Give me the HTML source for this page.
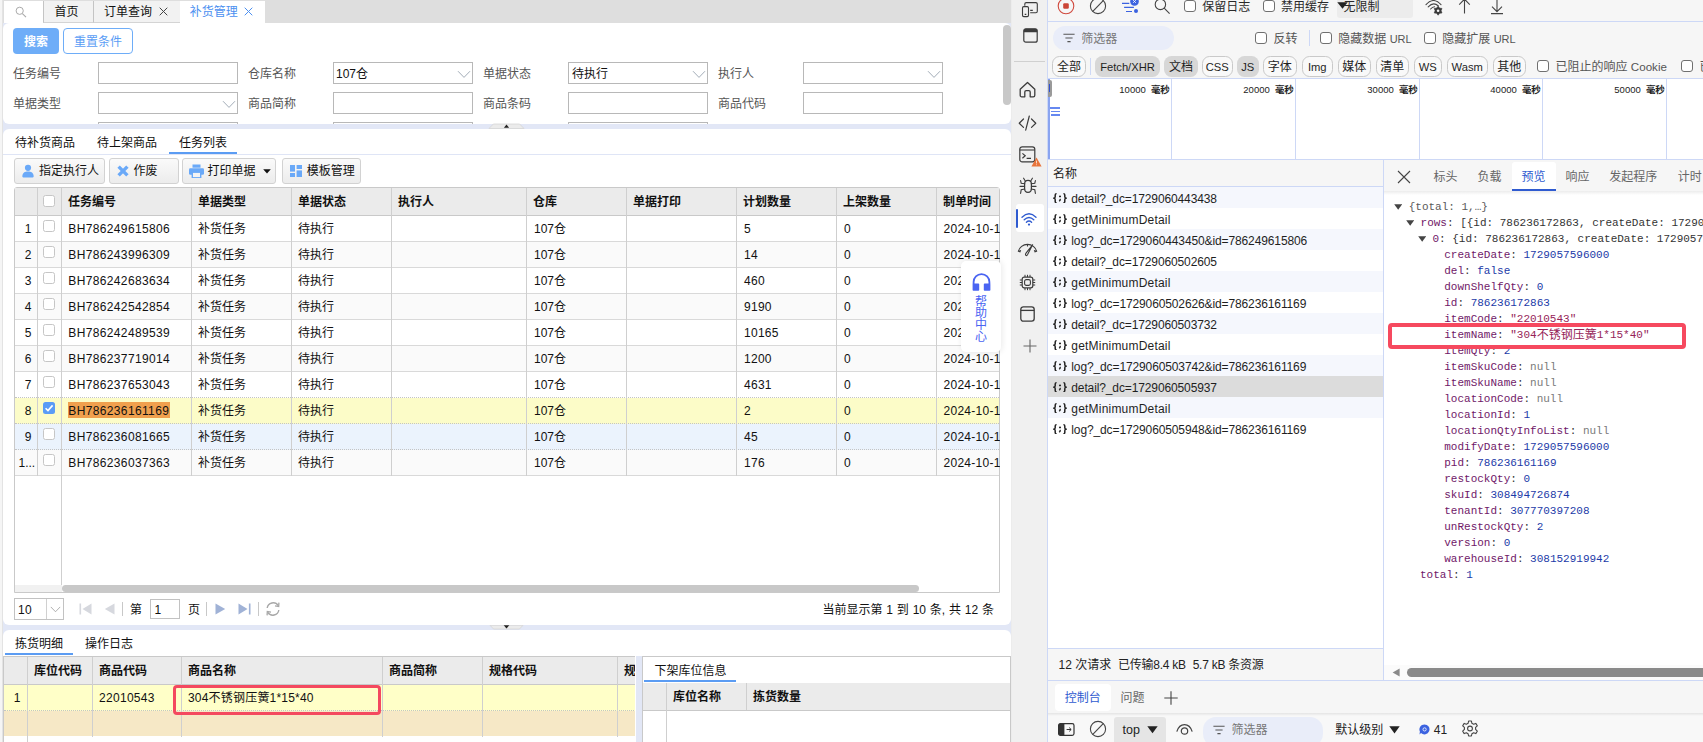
<!DOCTYPE html><html lang="zh-CN"><head><meta charset="utf-8"><title>补货管理</title><style>
*{box-sizing:border-box;margin:0;padding:0}
html,body{width:1703px;height:742px;overflow:hidden;background:#f5f5f5}
body{font-family:"Liberation Sans","Noto Sans CJK SC",sans-serif;font-size:12px;color:#111;position:relative}
#root{position:absolute;left:0;top:0;width:1703px;height:742px;overflow:hidden}
#root div,#root svg{position:absolute}
.t{white-space:nowrap;font-size:12px}
.b{font-weight:bold}
.m{white-space:nowrap;font-family:"Liberation Mono","Noto Sans CJK SC",monospace;font-size:11px}
.k{color:#701868}.n{color:#1c3aa8}.s{color:#962458}.g{color:#7a7a7a}.d{color:#333}
span{position:static}
</style></head><body><div id="root">
<div style="left:2px;top:0px;width:1px;height:742px;background:#e3e3e3"></div>
<div style="left:3px;top:0px;width:1008px;height:742px;background:#e2e7f6"></div>
<div style="left:3px;top:0px;width:1008px;height:23px;background:#dedede"></div>
<div style="left:4px;top:1px;width:39px;height:22px;background:#fff"></div>
<svg style="left:13px;top:4px" width="16" height="16" viewBox="0 0 16 16"><circle cx="6.7" cy="6.8" r="3.6" fill="none" stroke="#aaa" stroke-width="1"/><path d="M9.4 9.6 L13 13.2" stroke="#aaa" stroke-width="1.1" fill="none"/></svg>
<div style="left:43px;top:1px;width:50px;height:22px;background:#f2f2f2;border-left:1px solid #c4c4c4;border-bottom:1px solid #d4d4d4"></div>
<div style="left:93px;top:1px;width:87px;height:22px;background:#f2f2f2;border-left:1px solid #c4c4c4;border-bottom:1px solid #d4d4d4"></div>
<div style="left:180px;top:1px;width:85px;height:22px;background:#fff"></div>
<div class="t" style="left:54.5px;top:3.5px;height:16px;line-height:16px;">首页</div>
<div class="t" style="left:104px;top:3.5px;height:16px;line-height:16px;">订单查询</div>
<div class="t" style="left:189.7px;top:3.5px;height:16px;line-height:16px;color:#4b8ff0">补货管理</div>
<svg style="left:158.5px;top:7px" width="9" height="9" viewBox="0 0 9 9"><path d="M0.7 0.7 L8.3 8.3 M8.3 0.7 L0.7 8.3" stroke="#444" stroke-width="1" fill="none"/></svg>
<svg style="left:244.3px;top:7px" width="9" height="9" viewBox="0 0 9 9"><path d="M0.7 0.7 L8.3 8.3 M8.3 0.7 L0.7 8.3" stroke="#4b8ff0" stroke-width="1" fill="none"/></svg>
<div style="left:3px;top:23px;width:1008px;height:101px;background:#fff;border-radius:6px;overflow:hidden"></div>
<div style="left:13px;top:28px;width:46px;height:26px;background:#6eadf8;border-radius:4px"></div>
<div class="t" style="left:13px;top:33.8px;height:16px;line-height:16px;width:46px;text-align:center;color:#fff;font-weight:bold">搜索</div>
<div style="left:63px;top:28px;width:70px;height:26px;background:#fff;border:1px solid #6eadf8;border-radius:4px"></div>
<div class="t" style="left:63px;top:33.8px;height:16px;line-height:16px;width:70px;text-align:center;color:#5a9df5">重置条件</div>
<div class="t" style="left:13px;top:65.5px;height:16px;line-height:16px;color:#555">任务编号</div>
<div style="left:98px;top:62px;width:140px;height:22px;background:#fff;border:1px solid #b8b8b8"></div>
<div class="t" style="left:248px;top:65.5px;height:16px;line-height:16px;color:#555">仓库名称</div>
<div style="left:333px;top:62px;width:140px;height:22px;background:#fff;border:1px solid #b8b8b8"></div>
<svg style="left:456.5px;top:69.5px" width="14" height="9" viewBox="0 0 14 9"><path d="M1 1.2 L7 7.4 L13 1.2" stroke="#a3adb8" stroke-width="1" fill="none"/></svg>
<div class="t" style="left:336px;top:65.5px;height:16px;line-height:16px;color:#111">107仓</div>
<div class="t" style="left:483px;top:65.5px;height:16px;line-height:16px;color:#555">单据状态</div>
<div style="left:568px;top:62px;width:140px;height:22px;background:#fff;border:1px solid #b8b8b8"></div>
<svg style="left:691.5px;top:69.5px" width="14" height="9" viewBox="0 0 14 9"><path d="M1 1.2 L7 7.4 L13 1.2" stroke="#a3adb8" stroke-width="1" fill="none"/></svg>
<div class="t" style="left:572px;top:65.5px;height:16px;line-height:16px;color:#111">待执行</div>
<div class="t" style="left:718px;top:65.5px;height:16px;line-height:16px;color:#555">执行人</div>
<div style="left:803px;top:62px;width:140px;height:22px;background:#fff;border:1px solid #b8b8b8"></div>
<svg style="left:926.5px;top:69.5px" width="14" height="9" viewBox="0 0 14 9"><path d="M1 1.2 L7 7.4 L13 1.2" stroke="#a3adb8" stroke-width="1" fill="none"/></svg>
<div class="t" style="left:13px;top:95.5px;height:16px;line-height:16px;color:#555">单据类型</div>
<div style="left:98px;top:92px;width:140px;height:22px;background:#fff;border:1px solid #b8b8b8"></div>
<svg style="left:221.5px;top:99.5px" width="14" height="9" viewBox="0 0 14 9"><path d="M1 1.2 L7 7.4 L13 1.2" stroke="#a3adb8" stroke-width="1" fill="none"/></svg>
<div class="t" style="left:248px;top:95.5px;height:16px;line-height:16px;color:#555">商品简称</div>
<div style="left:333px;top:92px;width:140px;height:22px;background:#fff;border:1px solid #b8b8b8"></div>
<div class="t" style="left:483px;top:95.5px;height:16px;line-height:16px;color:#555">商品条码</div>
<div style="left:568px;top:92px;width:140px;height:22px;background:#fff;border:1px solid #b8b8b8"></div>
<div class="t" style="left:718px;top:95.5px;height:16px;line-height:16px;color:#555">商品代码</div>
<div style="left:803px;top:92px;width:140px;height:22px;background:#fff;border:1px solid #b8b8b8"></div>
<div style="left:98px;top:122px;width:140px;height:2px;border-top:1px solid #b8b8b8;border-left:1px solid #b8b8b8;border-right:1px solid #b8b8b8;background:#fff"></div>
<div style="left:333px;top:122px;width:140px;height:2px;border-top:1px solid #b8b8b8;border-left:1px solid #b8b8b8;border-right:1px solid #b8b8b8;background:#fff"></div>
<div style="left:568px;top:122px;width:140px;height:2px;border-top:1px solid #b8b8b8;border-left:1px solid #b8b8b8;border-right:1px solid #b8b8b8;background:#fff"></div>
<div style="left:1002.5px;top:24.5px;width:8px;height:80px;background:#c8c8c8;border-radius:4px"></div>
<svg style="left:488px;top:123.4px" width="38" height="6" viewBox="0 0 38 6"><path d="M1 5.5 L5.4 1 L31.6 1 L36 5.5 Z" fill="#ebebeb" stroke="#d6d6d6" stroke-width="0.8"/><path d="M15.9 4.8 L18.5 1.6 L21.1 4.8 Z" fill="#222"/></svg>
<div style="left:3px;top:129px;width:1008px;height:496px;background:#fff;border-radius:6px"></div>
<div class="t" style="left:15px;top:134.5px;height:16px;line-height:16px;">待补货商品</div>
<div class="t" style="left:97px;top:134.5px;height:16px;line-height:16px;">待上架商品</div>
<div class="t" style="left:179px;top:134.5px;height:16px;line-height:16px;">任务列表</div>
<div style="left:3px;top:154px;width:1008px;height:1px;background:#dfe5f6"></div>
<div style="left:169px;top:152px;width:68px;height:2px;background:#5b9cf3"></div>
<div style="left:14px;top:158px;width:90.5px;height:26px;background:linear-gradient(#fafafa,#ececec);border:1px solid #d2d2d2;border-radius:3px"></div>
<div style="left:109px;top:158px;width:69.5px;height:26px;background:linear-gradient(#fafafa,#ececec);border:1px solid #d2d2d2;border-radius:3px"></div>
<div style="left:182px;top:158px;width:93.5px;height:26px;background:linear-gradient(#fafafa,#ececec);border:1px solid #d2d2d2;border-radius:3px"></div>
<div style="left:282px;top:158px;width:78.5px;height:26px;background:linear-gradient(#fafafa,#ececec);border:1px solid #d2d2d2;border-radius:3px"></div>
<svg style="left:22px;top:164px" width="12" height="14" viewBox="0 0 12 14"><circle cx="6" cy="3.8" r="3.1" fill="#6aa9f8"/><path d="M0.3 12.6 C0.3 8.6 3 7.4 6 7.4 C9 7.4 11.7 8.6 11.7 12.6 Q11.7 13.4 10.8 13.4 L1.2 13.4 Q0.3 13.4 0.3 12.6 Z" fill="#6aa9f8"/></svg>
<div class="t" style="left:39px;top:163.0px;height:16px;line-height:16px;">指定执行人</div>
<svg style="left:116.5px;top:165px" width="12" height="12" viewBox="0 0 12 12"><path d="M1.6 1.6 L10.4 10.4 M10.4 1.6 L1.6 10.4" stroke="#6aa9f8" stroke-width="3.4" fill="none"/></svg>
<div class="t" style="left:133.4px;top:163.0px;height:16px;line-height:16px;">作废</div>
<svg style="left:189px;top:164px" width="15" height="14" viewBox="0 0 15 14"><rect x="3.5" y="0.5" width="8" height="3.2" fill="#6aa9f8"/><rect x="0" y="4.2" width="15" height="6.6" rx="1.3" fill="#6aa9f8"/><rect x="3.3" y="8.2" width="8.4" height="5.6" fill="#f4f4f4" stroke="#6aa9f8" stroke-width="1.4"/></svg>
<div class="t" style="left:207.5px;top:163.0px;height:16px;line-height:16px;">打印单据</div>
<svg style="left:263px;top:168.5px" width="8" height="5" viewBox="0 0 8 5"><path d="M0.2 0.3 L7.8 0.3 L4 4.6 Z" fill="#111"/></svg>
<svg style="left:289.5px;top:165px" width="12" height="12" viewBox="0 0 12 12"><rect x="0" y="0" width="5" height="6.6" fill="#6aa9f8"/><rect x="0" y="8" width="5" height="4" fill="#6aa9f8"/><rect x="6.6" y="0" width="5.4" height="4" fill="#6aa9f8"/><rect x="6.6" y="5.4" width="5.4" height="6.6" fill="#6aa9f8"/></svg>
<div class="t" style="left:306.8px;top:163.0px;height:16px;line-height:16px;">模板管理</div>
<div style="left:14px;top:187px;width:986px;height:406px;overflow:hidden"><div style="left:0px;top:0px;width:986px;height:406px;background:#fff;border:1px solid #c9c9c9;border-radius:3px 3px 0 0"></div><div style="left:1px;top:1px;width:984px;height:28px;background:#ebebeb;border-bottom:1px solid #c9c9c9"></div><div style="left:1px;top:29px;width:984px;height:26px;background:#fff;border-bottom:1px solid #d9d9d9"></div><div style="left:1px;top:55px;width:984px;height:26px;background:#fafafa;border-bottom:1px solid #d9d9d9"></div><div style="left:1px;top:81px;width:984px;height:26px;background:#fff;border-bottom:1px solid #d9d9d9"></div><div style="left:1px;top:107px;width:984px;height:26px;background:#fafafa;border-bottom:1px solid #d9d9d9"></div><div style="left:1px;top:133px;width:984px;height:26px;background:#fff;border-bottom:1px solid #d9d9d9"></div><div style="left:1px;top:159px;width:984px;height:26px;background:#fafafa;border-bottom:1px solid #d9d9d9"></div><div style="left:1px;top:185px;width:984px;height:26px;background:#fff;border-bottom:1px dotted #c4c4c4"></div><div style="left:1px;top:211px;width:984px;height:26px;background:#fcfcc8;border-bottom:1px dotted #c4c4c4"></div><div style="left:1px;top:237px;width:984px;height:26px;background:#ebf3fd;border-bottom:1px dotted #c4c4c4"></div><div style="left:1px;top:263px;width:984px;height:26px;background:#fafafa;border-bottom:1px solid #d9d9d9"></div><div style="left:23px;top:1px;width:1px;height:288px;background:#cfcfcf"></div><div style="left:47px;top:1px;width:1px;height:404px;background:#cfcfcf"></div><div style="left:177px;top:1px;width:1px;height:288px;background:#cfcfcf"></div><div style="left:277px;top:1px;width:1px;height:288px;background:#cfcfcf"></div><div style="left:377px;top:1px;width:1px;height:288px;background:#cfcfcf"></div><div style="left:512px;top:1px;width:1px;height:288px;background:#cfcfcf"></div><div style="left:612px;top:1px;width:1px;height:288px;background:#cfcfcf"></div><div style="left:722px;top:1px;width:1px;height:288px;background:#cfcfcf"></div><div style="left:822px;top:1px;width:1px;height:288px;background:#cfcfcf"></div><div style="left:922px;top:1px;width:1px;height:288px;background:#cfcfcf"></div><div class="t" style="left:54px;top:7.0px;height:16px;line-height:16px;font-weight:bold">任务编号</div><div class="t" style="left:184px;top:7.0px;height:16px;line-height:16px;font-weight:bold">单据类型</div><div class="t" style="left:284px;top:7.0px;height:16px;line-height:16px;font-weight:bold">单据状态</div><div class="t" style="left:384px;top:7.0px;height:16px;line-height:16px;font-weight:bold">执行人</div><div class="t" style="left:519px;top:7.0px;height:16px;line-height:16px;font-weight:bold">仓库</div><div class="t" style="left:619px;top:7.0px;height:16px;line-height:16px;font-weight:bold">单据打印</div><div class="t" style="left:729px;top:7.0px;height:16px;line-height:16px;font-weight:bold">计划数量</div><div class="t" style="left:829px;top:7.0px;height:16px;line-height:16px;font-weight:bold">上架数量</div><div class="t" style="left:929px;top:7.0px;height:16px;line-height:16px;font-weight:bold">制单时间</div><div style="left:29px;top:8px;width:12px;height:12px;background:#fff;border:1px solid #c6c6c6;border-radius:2.5px"></div><div class="t" style="left:0px;width:17.5px;text-align:right;top:33.5px;height:16px;line-height:16px">1</div><div style="left:29px;top:33.0px;width:12px;height:12px;background:#fff;border:1px solid #c6c6c6;border-radius:2.5px"></div><div class="t" style="left:54.3px;top:33.5px;height:16px;line-height:16px;letter-spacing:0.36px">BH786249615806</div><div class="t" style="left:184px;top:33.5px;height:16px;line-height:16px;">补货任务</div><div class="t" style="left:284px;top:33.5px;height:16px;line-height:16px;">待执行</div><div class="t" style="left:520px;top:33.5px;height:16px;line-height:16px;">107仓</div><div class="t" style="left:730px;top:33.5px;height:16px;line-height:16px;letter-spacing:0.28px">5</div><div class="t" style="left:830px;top:33.5px;height:16px;line-height:16px;">0</div><div class="t" style="left:929.5px;top:33.5px;height:16px;line-height:16px;letter-spacing:0.28px">2024-10-16 13:</div><div class="t" style="left:0px;width:17.5px;text-align:right;top:59.5px;height:16px;line-height:16px">2</div><div style="left:29px;top:59.0px;width:12px;height:12px;background:#fff;border:1px solid #c6c6c6;border-radius:2.5px"></div><div class="t" style="left:54.3px;top:59.5px;height:16px;line-height:16px;letter-spacing:0.36px">BH786243996309</div><div class="t" style="left:184px;top:59.5px;height:16px;line-height:16px;">补货任务</div><div class="t" style="left:284px;top:59.5px;height:16px;line-height:16px;">待执行</div><div class="t" style="left:520px;top:59.5px;height:16px;line-height:16px;">107仓</div><div class="t" style="left:730px;top:59.5px;height:16px;line-height:16px;letter-spacing:0.28px">14</div><div class="t" style="left:830px;top:59.5px;height:16px;line-height:16px;">0</div><div class="t" style="left:929.5px;top:59.5px;height:16px;line-height:16px;letter-spacing:0.28px">2024-10-16 13:</div><div class="t" style="left:0px;width:17.5px;text-align:right;top:85.5px;height:16px;line-height:16px">3</div><div style="left:29px;top:85.0px;width:12px;height:12px;background:#fff;border:1px solid #c6c6c6;border-radius:2.5px"></div><div class="t" style="left:54.3px;top:85.5px;height:16px;line-height:16px;letter-spacing:0.36px">BH786242683634</div><div class="t" style="left:184px;top:85.5px;height:16px;line-height:16px;">补货任务</div><div class="t" style="left:284px;top:85.5px;height:16px;line-height:16px;">待执行</div><div class="t" style="left:520px;top:85.5px;height:16px;line-height:16px;">107仓</div><div class="t" style="left:730px;top:85.5px;height:16px;line-height:16px;letter-spacing:0.28px">460</div><div class="t" style="left:830px;top:85.5px;height:16px;line-height:16px;">0</div><div class="t" style="left:929.5px;top:85.5px;height:16px;line-height:16px;letter-spacing:0.28px">2024-10-16 13:</div><div class="t" style="left:0px;width:17.5px;text-align:right;top:111.5px;height:16px;line-height:16px">4</div><div style="left:29px;top:111.0px;width:12px;height:12px;background:#fff;border:1px solid #c6c6c6;border-radius:2.5px"></div><div class="t" style="left:54.3px;top:111.5px;height:16px;line-height:16px;letter-spacing:0.36px">BH786242542854</div><div class="t" style="left:184px;top:111.5px;height:16px;line-height:16px;">补货任务</div><div class="t" style="left:284px;top:111.5px;height:16px;line-height:16px;">待执行</div><div class="t" style="left:520px;top:111.5px;height:16px;line-height:16px;">107仓</div><div class="t" style="left:730px;top:111.5px;height:16px;line-height:16px;letter-spacing:0.28px">9190</div><div class="t" style="left:830px;top:111.5px;height:16px;line-height:16px;">0</div><div class="t" style="left:929.5px;top:111.5px;height:16px;line-height:16px;letter-spacing:0.28px">2024-10-16 13:</div><div class="t" style="left:0px;width:17.5px;text-align:right;top:137.5px;height:16px;line-height:16px">5</div><div style="left:29px;top:137.0px;width:12px;height:12px;background:#fff;border:1px solid #c6c6c6;border-radius:2.5px"></div><div class="t" style="left:54.3px;top:137.5px;height:16px;line-height:16px;letter-spacing:0.36px">BH786242489539</div><div class="t" style="left:184px;top:137.5px;height:16px;line-height:16px;">补货任务</div><div class="t" style="left:284px;top:137.5px;height:16px;line-height:16px;">待执行</div><div class="t" style="left:520px;top:137.5px;height:16px;line-height:16px;">107仓</div><div class="t" style="left:730px;top:137.5px;height:16px;line-height:16px;letter-spacing:0.28px">10165</div><div class="t" style="left:830px;top:137.5px;height:16px;line-height:16px;">0</div><div class="t" style="left:929.5px;top:137.5px;height:16px;line-height:16px;letter-spacing:0.28px">2024-10-16 13:</div><div class="t" style="left:0px;width:17.5px;text-align:right;top:163.5px;height:16px;line-height:16px">6</div><div style="left:29px;top:163.0px;width:12px;height:12px;background:#fff;border:1px solid #c6c6c6;border-radius:2.5px"></div><div class="t" style="left:54.3px;top:163.5px;height:16px;line-height:16px;letter-spacing:0.36px">BH786237719014</div><div class="t" style="left:184px;top:163.5px;height:16px;line-height:16px;">补货任务</div><div class="t" style="left:284px;top:163.5px;height:16px;line-height:16px;">待执行</div><div class="t" style="left:520px;top:163.5px;height:16px;line-height:16px;">107仓</div><div class="t" style="left:730px;top:163.5px;height:16px;line-height:16px;letter-spacing:0.28px">1200</div><div class="t" style="left:830px;top:163.5px;height:16px;line-height:16px;">0</div><div class="t" style="left:929.5px;top:163.5px;height:16px;line-height:16px;letter-spacing:0.28px">2024-10-16 13:</div><div class="t" style="left:0px;width:17.5px;text-align:right;top:189.5px;height:16px;line-height:16px">7</div><div style="left:29px;top:189.0px;width:12px;height:12px;background:#fff;border:1px solid #c6c6c6;border-radius:2.5px"></div><div class="t" style="left:54.3px;top:189.5px;height:16px;line-height:16px;letter-spacing:0.36px">BH786237653043</div><div class="t" style="left:184px;top:189.5px;height:16px;line-height:16px;">补货任务</div><div class="t" style="left:284px;top:189.5px;height:16px;line-height:16px;">待执行</div><div class="t" style="left:520px;top:189.5px;height:16px;line-height:16px;">107仓</div><div class="t" style="left:730px;top:189.5px;height:16px;line-height:16px;letter-spacing:0.28px">4631</div><div class="t" style="left:830px;top:189.5px;height:16px;line-height:16px;">0</div><div class="t" style="left:929.5px;top:189.5px;height:16px;line-height:16px;letter-spacing:0.28px">2024-10-16 13:</div><div class="t" style="left:0px;width:17.5px;text-align:right;top:215.5px;height:16px;line-height:16px">8</div><div style="left:29px;top:215.0px;width:12px;height:12px;background:#5a9cf6;border-radius:2.5px"></div><svg style="left:29px;top:215.0px" width="12" height="12" viewBox="0 0 12 12"><path d="M2.6 6.2 L5 8.6 L9.6 3.4" stroke="#fff" stroke-width="1.6" fill="none"/></svg><div style="left:54px;top:215.0px;width:101.5px;height:16px;background:#f0a04e"></div><div class="t" style="left:54.3px;top:215.5px;height:16px;line-height:16px;letter-spacing:0.36px">BH786236161169</div><div class="t" style="left:184px;top:215.5px;height:16px;line-height:16px;">补货任务</div><div class="t" style="left:284px;top:215.5px;height:16px;line-height:16px;">待执行</div><div class="t" style="left:520px;top:215.5px;height:16px;line-height:16px;">107仓</div><div class="t" style="left:730px;top:215.5px;height:16px;line-height:16px;letter-spacing:0.28px">2</div><div class="t" style="left:830px;top:215.5px;height:16px;line-height:16px;">0</div><div class="t" style="left:929.5px;top:215.5px;height:16px;line-height:16px;letter-spacing:0.28px">2024-10-16 13:</div><div class="t" style="left:0px;width:17.5px;text-align:right;top:241.5px;height:16px;line-height:16px">9</div><div style="left:29px;top:241.0px;width:12px;height:12px;background:#fff;border:1px solid #c6c6c6;border-radius:2.5px"></div><div class="t" style="left:54.3px;top:241.5px;height:16px;line-height:16px;letter-spacing:0.36px">BH786236081665</div><div class="t" style="left:184px;top:241.5px;height:16px;line-height:16px;">补货任务</div><div class="t" style="left:284px;top:241.5px;height:16px;line-height:16px;">待执行</div><div class="t" style="left:520px;top:241.5px;height:16px;line-height:16px;">107仓</div><div class="t" style="left:730px;top:241.5px;height:16px;line-height:16px;letter-spacing:0.28px">45</div><div class="t" style="left:830px;top:241.5px;height:16px;line-height:16px;">0</div><div class="t" style="left:929.5px;top:241.5px;height:16px;line-height:16px;letter-spacing:0.28px">2024-10-16 13:</div><div class="t" style="left:4.5px;top:267.5px;height:16px;line-height:16px;">1...</div><div style="left:29px;top:267.0px;width:12px;height:12px;background:#fff;border:1px solid #c6c6c6;border-radius:2.5px"></div><div class="t" style="left:54.3px;top:267.5px;height:16px;line-height:16px;letter-spacing:0.36px">BH786236037363</div><div class="t" style="left:184px;top:267.5px;height:16px;line-height:16px;">补货任务</div><div class="t" style="left:284px;top:267.5px;height:16px;line-height:16px;">待执行</div><div class="t" style="left:520px;top:267.5px;height:16px;line-height:16px;">107仓</div><div class="t" style="left:730px;top:267.5px;height:16px;line-height:16px;letter-spacing:0.28px">176</div><div class="t" style="left:830px;top:267.5px;height:16px;line-height:16px;">0</div><div class="t" style="left:929.5px;top:267.5px;height:16px;line-height:16px;letter-spacing:0.28px">2024-10-16 13:</div><div style="left:1px;top:397.5px;width:47px;height:7.5px;background:#f1f1f1"></div><div style="left:48.5px;top:397.5px;width:936px;height:7.5px;background:#fff"></div><div style="left:48px;top:397.5px;width:857px;height:7.5px;background:#c8c8c8;border-radius:4px"></div></div>
<div style="left:961px;top:261px;width:40px;height:91px;background:#fff;border-radius:5px;box-shadow:1px 0 6px rgba(0,0,0,0.09)"></div>
<svg style="left:971.5px;top:273px" width="19" height="18" viewBox="0 0 19 18"><path d="M1.6 11 V9 A7.9 7.9 0 0 1 17.4 9 V11" fill="none" stroke="#4a64f2" stroke-width="1.8"/><rect x="0.6" y="10.6" width="6.6" height="7.2" rx="0.8" fill="#4a64f2"/><rect x="11.8" y="10.6" width="6.6" height="7.2" rx="0.8" fill="#4a64f2"/></svg>
<div class="t" style="left:975px;top:295.6px;height:12px;line-height:12px;color:#4a64f2;width:12px;text-align:center">帮</div>
<div class="t" style="left:975px;top:307.35px;height:12px;line-height:12px;color:#4a64f2;width:12px;text-align:center">助</div>
<div class="t" style="left:975px;top:319.1px;height:12px;line-height:12px;color:#4a64f2;width:12px;text-align:center">中</div>
<div class="t" style="left:975px;top:330.85px;height:12px;line-height:12px;color:#4a64f2;width:12px;text-align:center">心</div>
<div style="left:14px;top:598px;width:50px;height:22px;background:#fff;border:1px solid #c2c2c2"></div>
<div style="left:46px;top:599px;width:1px;height:20px;background:#d0d0d0"></div>
<div class="t" style="left:18px;top:601.5px;height:16px;line-height:16px;letter-spacing:0.3px">10</div>
<svg style="left:49.5px;top:606px" width="11" height="7" viewBox="0 0 14 9"><path d="M1 1.2 L7 7.4 L13 1.2" stroke="#999" stroke-width="1" fill="none"/></svg>
<svg style="left:79px;top:603px" width="13" height="12" viewBox="0 0 13 12"><rect x="0.5" y="0.5" width="1.6" height="11" fill="#d6d8de"/><path d="M12.5 0.5 L12.5 11.5 L3.5 6 Z" fill="#d6d8de"/></svg>
<svg style="left:104px;top:603px" width="11" height="12" viewBox="0 0 11 12"><path d="M10.5 0.5 L10.5 11.5 L0.8 6 Z" fill="#d6d8de"/></svg>
<div style="left:122px;top:602px;width:1px;height:14px;background:#c8c8c8"></div>
<div class="t" style="left:130px;top:601.5px;height:16px;line-height:16px;">第</div>
<div style="left:150px;top:599px;width:30px;height:20px;background:#fff;border:1px solid #c2c2c2"></div>
<div class="t" style="left:154.5px;top:601.5px;height:16px;line-height:16px;">1</div>
<div class="t" style="left:188px;top:601.5px;height:16px;line-height:16px;">页</div>
<div style="left:206px;top:602px;width:1px;height:14px;background:#c8c8c8"></div>
<svg style="left:215px;top:603px" width="11" height="12" viewBox="0 0 11 12"><path d="M0.5 0.5 L0.5 11.5 L10.2 6 Z" fill="#a0b2d6"/></svg>
<svg style="left:238px;top:603px" width="13" height="12" viewBox="0 0 13 12"><rect x="10.9" y="0.5" width="1.6" height="11" fill="#a0b2d6"/><path d="M0.5 0.5 L0.5 11.5 L9.5 6 Z" fill="#a0b2d6"/></svg>
<div style="left:258px;top:602px;width:1px;height:14px;background:#c8c8c8"></div>
<svg style="left:265px;top:601px" width="16" height="16" viewBox="0 0 16 16"><path d="M2.2 7 A6 6 0 0 1 13.2 4.6 M13.8 9 A6 6 0 0 1 2.8 11.4" fill="none" stroke="#a8a8a8" stroke-width="1.4"/><path d="M13.9 1.6 L13.7 5.4 L10 4.9" fill="none" stroke="#a8a8a8" stroke-width="1.3"/><path d="M2.1 14.4 L2.3 10.6 L6 11.1" fill="none" stroke="#a8a8a8" stroke-width="1.3"/></svg>
<div class="t" style="right:709px;top:601.5px;height:16px;line-height:16px;word-spacing:0.5px">当前显示第 1 到 10 条, 共 12 条</div>
<svg style="left:488px;top:624.6px" width="38" height="6" viewBox="0 0 38 6"><path d="M2 0.3 L5.5 4 L31.5 4 L35 0.3 Z" fill="#ebebeb" stroke="#d6d6d6" stroke-width="0.8"/><path d="M15.7 0.3 L18.5 3.6 L21.3 0.3 Z" fill="#222"/></svg>
<div style="left:3px;top:630px;width:1008px;height:120px;background:#fff;border-radius:6px 6px 0 0"></div>
<div class="t" style="left:15px;top:635.5px;height:16px;line-height:16px;">拣货明细</div>
<div class="t" style="left:85px;top:635.5px;height:16px;line-height:16px;">操作日志</div>
<div style="left:5px;top:653px;width:68px;height:2px;background:#5b9cf3"></div>
<div style="left:3px;top:656px;width:632px;height:90px;overflow:hidden"><div style="left:0px;top:0px;width:633px;height:90px;background:#fff;border-top:1px solid #c9c9c9;border-left:1px solid #c9c9c9"></div><div style="left:1px;top:1px;width:632px;height:27.5px;background:#ebebeb;border-bottom:1px solid #c9c9c9"></div><div style="left:1px;top:28.5px;width:632px;height:26px;background:#ffffc8;border-bottom:1px dotted #c4c4c4"></div><div style="left:1px;top:54.5px;width:632px;height:25.5px;background:#f6e8c6"></div><div style="left:24px;top:1px;width:1px;height:90px;background:#cfcfcf"></div><div style="left:89px;top:1px;width:1px;height:80px;background:#cfcfcf"></div><div style="left:178px;top:1px;width:1px;height:80px;background:#cfcfcf"></div><div style="left:379px;top:1px;width:1px;height:80px;background:#cfcfcf"></div><div style="left:479px;top:1px;width:1px;height:80px;background:#cfcfcf"></div><div style="left:614px;top:1px;width:1px;height:80px;background:#cfcfcf"></div><div class="t" style="left:31px;top:6.5px;height:16px;line-height:16px;font-weight:bold">库位代码</div><div class="t" style="left:96px;top:6.5px;height:16px;line-height:16px;font-weight:bold">商品代码</div><div class="t" style="left:185px;top:6.5px;height:16px;line-height:16px;font-weight:bold">商品名称</div><div class="t" style="left:386px;top:6.5px;height:16px;line-height:16px;font-weight:bold">商品简称</div><div class="t" style="left:486px;top:6.5px;height:16px;line-height:16px;font-weight:bold">规格代码</div><div class="t" style="left:621px;top:6.5px;height:16px;line-height:16px;font-weight:bold">规格</div><div class="t" style="left:0;width:17.5px;text-align:right;top:33.5px;height:16px;line-height:16px">1</div><div class="t" style="left:96px;top:33.5px;height:16px;line-height:16px;letter-spacing:0.3px">22010543</div><div class="t" style="left:185px;top:33.5px;height:16px;line-height:16px;letter-spacing:0.2px">304不锈钢压簧1*15*40</div></div>
<div style="left:173px;top:684.5px;width:208px;height:30px;border:3px solid #f4495f;border-radius:4px"></div>
<div style="left:635.5px;top:656px;width:6.5px;height:90px;background:#e2e7f6"></div>
<div style="left:642px;top:656px;width:369px;height:90px;overflow:hidden"><div style="left:0px;top:0px;width:369px;height:90px;background:#fff;border:1px solid #c9c9c9"></div><div class="t" style="left:12.5px;top:7.0px;height:16px;line-height:16px;">下架库位信息</div><div style="left:2px;top:24px;width:92px;height:2px;background:#5b9cf3"></div><div style="left:1px;top:27px;width:367px;height:27.5px;background:#ebebeb;border-bottom:1px solid #c9c9c9"></div><div style="left:24px;top:27px;width:1px;height:63px;background:#cfcfcf"></div><div style="left:104px;top:27px;width:1px;height:27px;background:#cfcfcf"></div><div class="t" style="left:31px;top:33.0px;height:16px;line-height:16px;font-weight:bold">库位名称</div><div class="t" style="left:111px;top:33.0px;height:16px;line-height:16px;font-weight:bold">拣货数量</div></div>
<div style="left:1011px;top:0px;width:37px;height:742px;background:#f0f0f0"></div>
<div style="left:1011px;top:0px;width:1px;height:742px;background:#ececec"></div>
<svg style="left:1021px;top:1px" width="18" height="17" viewBox="0 0 18 17"><path d="M3.8 4.8 V3 Q3.8 1.6 5.2 1.6 H14.9 Q16.3 1.6 16.3 3 V10.3 Q16.3 11.7 14.9 11.7 H9.2" fill="none" stroke="#3b3b3b" stroke-width="1.1"/><rect x="1.5" y="5.6" width="6" height="10" rx="1.3" fill="none" stroke="#3b3b3b" stroke-width="1.1"/><path d="M3.7 13.4 H5.3 M9.2 9.4 H11.8" stroke="#3b3b3b" stroke-width="1.1"/></svg>
<svg style="left:1022.5px;top:27.5px" width="15" height="15" viewBox="0 0 15 15"><rect x="0.8" y="0.8" width="13.4" height="13.4" rx="2" fill="none" stroke="#3b3b3b" stroke-width="1.2"/><path d="M0.8 2.8 Q0.8 0.8 2.8 0.8 H12.2 Q14.2 0.8 14.2 2.8 V4.2 H0.8 Z" fill="#3b3b3b"/></svg>
<div style="left:1014px;top:61px;width:31px;height:1px;background:#d0d0d0"></div>
<svg style="left:1018.5px;top:81px" width="17" height="17" viewBox="0 0 17 17"><path d="M1.2 8.2 L8.5 1.4 L15.8 8.2 V14.2 Q15.8 15.8 14.2 15.8 H11.2 V11 Q11.2 9.6 9.8 9.6 H7.2 Q5.8 9.6 5.8 11 V15.8 H2.8 Q1.2 15.8 1.2 14.2 Z" fill="none" stroke="#3b3b3b" stroke-width="1.3" stroke-linejoin="round"/></svg>
<svg style="left:1017.5px;top:114.5px" width="19" height="16" viewBox="0 0 19 16"><path d="M5.5 4 L1.2 8.2 L5.5 12.4 M13.5 4 L17.8 8.2 L13.5 12.4 M11.3 1 L7.7 15.2" fill="none" stroke="#3b3b3b" stroke-width="1.2" stroke-linecap="round" stroke-linejoin="round"/></svg>
<svg style="left:1018.5px;top:145.5px" width="17" height="17" viewBox="0 0 17 17"><rect x="0.8" y="0.8" width="15" height="15" rx="2.4" fill="none" stroke="#3b3b3b" stroke-width="1.2"/><path d="M0.8 4 H15.8" stroke="#3b3b3b" stroke-width="1.1"/><path d="M3.4 7.4 L6.2 9.8 L3.4 12.2 M7.6 12.4 H12" fill="none" stroke="#3b3b3b" stroke-width="1.2"/></svg>
<svg style="left:1030.5px;top:156.5px" width="11" height="10" viewBox="0 0 11 10"><path d="M5.5 0.6 L10.6 9.4 H0.4 Z" fill="#e8743b"/><path d="M5.5 3.6 V6.4 M5.5 7.4 V8.2" stroke="#f8d8c4" stroke-width="1"/></svg>
<svg style="left:1018.5px;top:176.5px" width="18" height="18" viewBox="0 0 18 18"><path d="M5.6 7 Q5.6 3.4 9 3.4 Q12.4 3.4 12.4 7 V11.6 Q12.4 15.4 9 15.4 Q5.6 15.4 5.6 11.6 Z" fill="none" stroke="#3b3b3b" stroke-width="1.2"/><path d="M6.4 4.2 L4.6 1.2 M11.6 4.2 L13.4 1.2 M5.6 9.4 H1 M12.4 9.4 H17 M5.8 6.8 L2.2 6.2 L1.6 3.6 M12.2 6.8 L15.8 6.2 L16.4 3.6 M5.8 12 L2.2 12.8 L1.6 16.4 M12.2 12 L15.8 12.8 L16.4 16.4" fill="none" stroke="#3b3b3b" stroke-width="1.1" stroke-linecap="round"/></svg>
<div style="left:1016px;top:204px;width:28px;height:28px;background:#fff;border-radius:3px"></div>
<div style="left:1016.3px;top:208.5px;width:1.6px;height:19px;background:#2f5bd0;border-radius:1px"></div>
<svg style="left:1020.5px;top:210.5px" width="16" height="16" viewBox="0 0 16 16"><path d="M1 6.2 Q8 -0.6 15 6.2 M3.2 8.8 Q8 4.2 12.8 8.8 M5.4 11.2 Q8 8.8 10.6 11.2" fill="none" stroke="#2f5bd0" stroke-width="1.3" stroke-linecap="round"/><circle cx="8" cy="13.6" r="1.1" fill="#2f5bd0"/></svg>
<svg style="left:1016.5px;top:241.5px" width="21" height="16" viewBox="0 0 21 16"><path d="M1.2 9.6 A9.6 9.6 0 0 1 19.8 9.6" fill="none" stroke="#3b3b3b" stroke-width="1.15"/><path d="M1.4 9.4 L4 8.4 M19.6 9.4 L17 8.4 M10.5 2.2 V4.6 M3.4 8.6 L2.8 10.4 M17.6 8.6 L18.2 10.4" stroke="#3b3b3b" stroke-width="1.1" fill="none"/><path d="M15.6 2.8 L10.6 12.6 Q9.8 14 8.9 13.4 Q8.1 12.8 8.8 11.4 Z" fill="#f0f0f0" stroke="#3b3b3b" stroke-width="1.1" stroke-linejoin="round"/></svg>
<svg style="left:1018.5px;top:273.5px" width="17" height="17" viewBox="0 0 17 17"><rect x="3.2" y="3.2" width="10.6" height="10.6" rx="2" fill="none" stroke="#3b3b3b" stroke-width="1.2"/><rect x="5.6" y="5.6" width="5.8" height="5.8" rx="1.6" fill="none" stroke="#3b3b3b" stroke-width="1.1"/><path d="M6 0.8 V3 M8.5 0.8 V3 M11 0.8 V3 M6 14 V16.2 M8.5 14 V16.2 M11 14 V16.2 M0.8 6 H3 M0.8 8.5 H3 M0.8 11 H3 M14 6 H16.2 M14 8.5 H16.2 M14 11 H16.2" stroke="#3b3b3b" stroke-width="1"/></svg>
<svg style="left:1019.5px;top:306px" width="15" height="16" viewBox="0 0 15 16"><rect x="0.8" y="0.8" width="13.4" height="14.4" rx="2.6" fill="none" stroke="#3b3b3b" stroke-width="1.3"/><path d="M0.8 4.4 H14.2" stroke="#3b3b3b" stroke-width="1.3"/></svg>
<svg style="left:1023px;top:339px" width="14" height="14" viewBox="0 0 14 14"><path d="M7 0.5 V13.5 M0.5 7 H13.5" stroke="#666" stroke-width="1.1"/></svg>
<div style="left:1048px;top:0px;width:655px;height:742px;background:#f6f6f6"></div>
<div style="left:1047px;top:0px;width:1px;height:742px;background:#cdd8f6"></div>
<svg style="left:1057px;top:-3px" width="18" height="18" viewBox="0 0 18 18"><circle cx="9" cy="9" r="7.8" fill="none" stroke="#d0493d" stroke-width="1.1"/><rect x="6.2" y="6.2" width="5.6" height="5.6" rx="1.2" fill="#cb4536"/></svg>
<svg style="left:1089px;top:-3px" width="18" height="18" viewBox="0 0 18 18"><circle cx="9" cy="9" r="7.6" fill="none" stroke="#444" stroke-width="1.1"/><path d="M3.8 14.4 L14.2 3.6" stroke="#444" stroke-width="1.1"/></svg>
<svg style="left:1120px;top:-2px" width="20" height="17" viewBox="0 0 20 17"><path d="M2 5.4 H9.3 M4.1 9.4 H13.9 M6 13.5 H12" stroke="#3c63e0" stroke-width="1.2" fill="none"/><circle cx="14.5" cy="3.5" r="4.3" fill="#3c63e0"/><path d="M13.2 2.2 L15.8 4.8 M15.8 2.2 L13.2 4.8" stroke="#fff" stroke-width="0.9"/><circle cx="16" cy="13" r="2" fill="#3c63e0"/></svg>
<svg style="left:1153px;top:-3px" width="18" height="18" viewBox="0 0 18 18"><circle cx="7.4" cy="7.4" r="5.2" fill="none" stroke="#444" stroke-width="1.1"/><path d="M11.2 11.2 L16.6 16.6" stroke="#444" stroke-width="1.1"/></svg>
<div style="left:1184px;top:0px;width:12px;height:12px;background:#fff;border:1px solid #707070;border-radius:3px"></div>
<div class="t" style="left:1202.3px;top:-1.5px;height:16px;line-height:16px;color:#2a2a2a">保留日志</div>
<div style="left:1263px;top:0px;width:12px;height:12px;background:#fff;border:1px solid #707070;border-radius:3px"></div>
<div class="t" style="left:1281px;top:-1.5px;height:16px;line-height:16px;color:#2a2a2a">禁用缓存</div>
<div style="left:1337px;top:0px;width:76px;height:17.5px;background:#ececec;border-radius:0 0 3px 3px"></div>
<svg style="left:1336.5px;top:2px" width="11" height="7" viewBox="0 0 11 7"><path d="M0.3 0.3 H10.7 L5.5 6.7 Z" fill="#222"/></svg>
<div class="t" style="left:1343.5px;top:-1.5px;height:16px;line-height:16px;color:#2a2a2a">无限制</div>
<svg style="left:1424.5px;top:-2px" width="19" height="18" viewBox="0 0 19 18"><path d="M1 6.6 Q8.5 -1.6 16 6.6 M3.2 8.8 Q8.5 3.4 13.4 8 M5.6 11 Q7.4 9 9.6 8.8" fill="none" stroke="#444" stroke-width="1.1" stroke-linecap="round"/><path d="M13.10 8.20 L14.60 10.10 L17.00 10.45 L16.10 12.70 L17.00 14.95 L14.60 15.30 L13.10 17.20 L11.60 15.30 L9.20 14.95 L10.10 12.70 L9.20 10.45 L11.60 10.10 Z" fill="#3a3a3a" stroke="#3a3a3a" stroke-width="0.6" stroke-linejoin="round"/><circle cx="13.1" cy="12.7" r="1.3" fill="#f6f6f6"/></svg>
<svg style="left:1458px;top:-2px" width="13" height="16" viewBox="0 0 13 16"><path d="M6.5 15.5 V1.2 M1.2 6.6 L6.5 1.2 L11.8 6.6" fill="none" stroke="#444" stroke-width="1.1"/></svg>
<svg style="left:1490px;top:-2px" width="14" height="17" viewBox="0 0 14 17"><path d="M7 0 V13.4 M2 8.7 L7 13.7 L12 8.7 M1 15.6 H13" fill="none" stroke="#444" stroke-width="1.1"/></svg>
<div style="left:1048px;top:21px;width:655px;height:1px;background:#cdd8f6"></div>
<div style="left:1052.5px;top:26px;width:121px;height:24px;background:#e9edf9;border-radius:12px"></div>
<svg style="left:1063px;top:33px" width="12" height="10" viewBox="0 0 12 10"><path d="M0.4 1.2 H11.6 M2.4 5 H9.6 M4.4 8.6 H7.6" stroke="#555" stroke-width="1.1"/></svg>
<div class="t" style="left:1081.3px;top:30.5px;height:16px;line-height:16px;color:#777">筛选器</div>
<div style="left:1255px;top:32px;width:12px;height:12px;background:#fff;border:1px solid #707070;border-radius:3px"></div>
<div class="t" style="left:1273.5px;top:30.5px;height:16px;line-height:16px;color:#555">反转</div>
<div style="left:1308.5px;top:30px;width:1px;height:16px;background:#cdd8f6"></div>
<div style="left:1320px;top:32px;width:12px;height:12px;background:#fff;border:1px solid #707070;border-radius:3px"></div>
<div class="t" style="left:1338.3px;top:30.5px;height:16px;line-height:16px;color:#555">隐藏数据 <span style="font-size:11px">URL</span></div>
<div style="left:1424px;top:32px;width:12px;height:12px;background:#fff;border:1px solid #707070;border-radius:3px"></div>
<div class="t" style="left:1442.3px;top:30.5px;height:16px;line-height:16px;color:#555">隐藏扩展 <span style="font-size:11px">URL</span></div>
<div style="left:1052px;top:56px;width:34px;height:21px;background:#f9f9f9;border:1px solid #c9c9c9;border-radius:7.5px"></div>
<div class="t" style="left:1052px;top:59.0px;height:16px;line-height:16px;width:34px;text-align:center;color:#1f1f1f">全部</div>
<div style="left:1095px;top:56px;width:65px;height:21px;background:#d7d7d7;border-radius:7.5px"></div>
<div class="t" style="left:1095px;top:59.0px;height:16px;line-height:16px;width:65px;text-align:center;color:#1f1f1f;font-size:11.2px">Fetch/XHR</div>
<div style="left:1164px;top:56px;width:34px;height:21px;background:#d7d7d7;border-radius:7.5px"></div>
<div class="t" style="left:1164px;top:59.0px;height:16px;line-height:16px;width:34px;text-align:center;color:#1f1f1f">文档</div>
<div style="left:1202px;top:56px;width:30.5px;height:21px;background:#f9f9f9;border:1px solid #c9c9c9;border-radius:7.5px"></div>
<div class="t" style="left:1202px;top:59.0px;height:16px;line-height:16px;width:30.5px;text-align:center;color:#1f1f1f;font-size:11.2px">CSS</div>
<div style="left:1236.5px;top:56px;width:22.5px;height:21px;background:#d7d7d7;border-radius:7.5px"></div>
<div class="t" style="left:1236.5px;top:59.0px;height:16px;line-height:16px;width:22.5px;text-align:center;color:#1f1f1f;font-size:11.2px">JS</div>
<div style="left:1263px;top:56px;width:33.5px;height:21px;background:#f9f9f9;border:1px solid #c9c9c9;border-radius:7.5px"></div>
<div class="t" style="left:1263px;top:59.0px;height:16px;line-height:16px;width:33.5px;text-align:center;color:#1f1f1f">字体</div>
<div style="left:1302px;top:56px;width:30.5px;height:21px;background:#f9f9f9;border:1px solid #c9c9c9;border-radius:7.5px"></div>
<div class="t" style="left:1302px;top:59.0px;height:16px;line-height:16px;width:30.5px;text-align:center;color:#1f1f1f;font-size:11.2px">Img</div>
<div style="left:1337.5px;top:56px;width:33.5px;height:21px;background:#f9f9f9;border:1px solid #c9c9c9;border-radius:7.5px"></div>
<div class="t" style="left:1337.5px;top:59.0px;height:16px;line-height:16px;width:33.5px;text-align:center;color:#1f1f1f">媒体</div>
<div style="left:1375.5px;top:56px;width:33.5px;height:21px;background:#f9f9f9;border:1px solid #c9c9c9;border-radius:7.5px"></div>
<div class="t" style="left:1375.5px;top:59.0px;height:16px;line-height:16px;width:33.5px;text-align:center;color:#1f1f1f">清单</div>
<div style="left:1413.5px;top:56px;width:28.5px;height:21px;background:#f9f9f9;border:1px solid #c9c9c9;border-radius:7.5px"></div>
<div class="t" style="left:1413.5px;top:59.0px;height:16px;line-height:16px;width:28.5px;text-align:center;color:#1f1f1f;font-size:11.2px">WS</div>
<div style="left:1446.5px;top:56px;width:41.5px;height:21px;background:#f9f9f9;border:1px solid #c9c9c9;border-radius:7.5px"></div>
<div class="t" style="left:1446.5px;top:59.0px;height:16px;line-height:16px;width:41.5px;text-align:center;color:#1f1f1f;font-size:11.2px">Wasm</div>
<div style="left:1492.5px;top:56px;width:33.5px;height:21px;background:#f9f9f9;border:1px solid #c9c9c9;border-radius:7.5px"></div>
<div class="t" style="left:1492.5px;top:59.0px;height:16px;line-height:16px;width:33.5px;text-align:center;color:#1f1f1f">其他</div>
<div style="left:1090px;top:58px;width:1px;height:17px;background:#cdd8f6"></div>
<div style="left:1537px;top:60px;width:12px;height:12px;background:#fff;border:1px solid #707070;border-radius:3px"></div>
<div class="t" style="left:1555.5px;top:59.0px;height:16px;line-height:16px;color:#555">已阻止的响应 <span style="font-size:11.6px">Cookie</span></div>
<div style="left:1681px;top:60px;width:12px;height:12px;background:#fff;border:1px solid #707070;border-radius:3px"></div>
<div class="t" style="left:1699.5px;top:59.0px;height:16px;line-height:16px;color:#555">已阻止的请求</div>
<div style="left:1048px;top:78px;width:655px;height:1px;background:#cdd8f6"></div>
<div style="left:1048px;top:79px;width:655px;height:80px;background:#fff"></div>
<div style="left:1171px;top:79px;width:1px;height:80px;background:#cdd8f6"></div>
<div class="t" style="right:533.5px;top:83.8px;height:12px;line-height:12px;font-size:9.5px;color:#222;word-spacing:2.5px">10000 <span style="font-size:9.5px;font-weight:bold;letter-spacing:-0.2px">毫秒</span></div>
<div style="left:1295px;top:79px;width:1px;height:80px;background:#cdd8f6"></div>
<div class="t" style="right:409.5px;top:83.8px;height:12px;line-height:12px;font-size:9.5px;color:#222;word-spacing:2.5px">20000 <span style="font-size:9.5px;font-weight:bold;letter-spacing:-0.2px">毫秒</span></div>
<div style="left:1419px;top:79px;width:1px;height:80px;background:#cdd8f6"></div>
<div class="t" style="right:285.5px;top:83.8px;height:12px;line-height:12px;font-size:9.5px;color:#222;word-spacing:2.5px">30000 <span style="font-size:9.5px;font-weight:bold;letter-spacing:-0.2px">毫秒</span></div>
<div style="left:1542px;top:79px;width:1px;height:80px;background:#cdd8f6"></div>
<div class="t" style="right:162.5px;top:83.8px;height:12px;line-height:12px;font-size:9.5px;color:#222;word-spacing:2.5px">40000 <span style="font-size:9.5px;font-weight:bold;letter-spacing:-0.2px">毫秒</span></div>
<div style="left:1666px;top:79px;width:1px;height:80px;background:#cdd8f6"></div>
<div class="t" style="right:38.5px;top:83.8px;height:12px;line-height:12px;font-size:9.5px;color:#222;word-spacing:2.5px">50000 <span style="font-size:9.5px;font-weight:bold;letter-spacing:-0.2px">毫秒</span></div>
<div style="left:1048px;top:79px;width:2px;height:80px;background:#8aa4f0"></div>
<div style="left:1048px;top:80px;width:4px;height:17px;background:#9a9a9a;border-radius:0 2px 2px 0"></div>
<div style="left:1049.2px;top:84px;width:1px;height:8px;background:#2f4fd0"></div>
<div style="left:1050px;top:107px;width:9.5px;height:1.8px;background:#6688f0"></div>
<div style="left:1050.6px;top:110.5px;width:9.5px;height:1.8px;background:#6688f0"></div>
<div style="left:1050.6px;top:114px;width:9.5px;height:1.8px;background:#6688f0"></div>
<div style="left:1048px;top:159px;width:655px;height:1px;background:#cdd8f6"></div>
<div style="left:1048px;top:160px;width:335px;height:26px;background:#f6f6f6"></div>
<div class="t" style="left:1053px;top:165.5px;height:16px;line-height:16px;color:#222">名称</div>
<div style="left:1048px;top:186px;width:335px;height:1px;background:#cdd8f6"></div>
<div style="left:1048px;top:187px;width:335px;height:461px;background:#fff"></div>
<div style="left:1048px;top:187px;width:335px;height:21px;background:#f5f7fd"></div>
<svg style="left:1053px;top:192.8px" width="14" height="10.4" viewBox="0 0 14 12" preserveAspectRatio="none"><path d="M3.6 0.8 Q2.2 0.8 2.2 2.2 V4.2 Q2.2 5.6 0.8 6 Q2.2 6.4 2.2 7.8 V9.8 Q2.2 11.2 3.6 11.2 M10.4 0.8 Q11.8 0.8 11.8 2.2 V4.2 Q11.8 5.6 13.2 6 Q11.8 6.4 11.8 7.8 V9.8 Q11.8 11.2 10.4 11.2" fill="none" stroke="#222" stroke-width="1.5"/><circle cx="7" cy="4" r="1.05" fill="#222"/><path d="M7.2 6.8 Q7.5 8.6 6.2 9.6" stroke="#222" stroke-width="1.4" fill="none"/></svg>
<div class="t" style="left:1071.3px;top:191.3px;height:16px;line-height:16px;color:#1f1f1f;letter-spacing:-0.12px">detail?_dc=1729060443438</div>
<svg style="left:1053px;top:213.8px" width="14" height="10.4" viewBox="0 0 14 12" preserveAspectRatio="none"><path d="M3.6 0.8 Q2.2 0.8 2.2 2.2 V4.2 Q2.2 5.6 0.8 6 Q2.2 6.4 2.2 7.8 V9.8 Q2.2 11.2 3.6 11.2 M10.4 0.8 Q11.8 0.8 11.8 2.2 V4.2 Q11.8 5.6 13.2 6 Q11.8 6.4 11.8 7.8 V9.8 Q11.8 11.2 10.4 11.2" fill="none" stroke="#222" stroke-width="1.5"/><circle cx="7" cy="4" r="1.05" fill="#222"/><path d="M7.2 6.8 Q7.5 8.6 6.2 9.6" stroke="#222" stroke-width="1.4" fill="none"/></svg>
<div class="t" style="left:1071.3px;top:212.3px;height:16px;line-height:16px;color:#1f1f1f;letter-spacing:0.2px">getMinimumDetail</div>
<div style="left:1048px;top:229px;width:335px;height:21px;background:#f5f7fd"></div>
<svg style="left:1053px;top:234.8px" width="14" height="10.4" viewBox="0 0 14 12" preserveAspectRatio="none"><path d="M3.6 0.8 Q2.2 0.8 2.2 2.2 V4.2 Q2.2 5.6 0.8 6 Q2.2 6.4 2.2 7.8 V9.8 Q2.2 11.2 3.6 11.2 M10.4 0.8 Q11.8 0.8 11.8 2.2 V4.2 Q11.8 5.6 13.2 6 Q11.8 6.4 11.8 7.8 V9.8 Q11.8 11.2 10.4 11.2" fill="none" stroke="#222" stroke-width="1.5"/><circle cx="7" cy="4" r="1.05" fill="#222"/><path d="M7.2 6.8 Q7.5 8.6 6.2 9.6" stroke="#222" stroke-width="1.4" fill="none"/></svg>
<div class="t" style="left:1071.3px;top:233.3px;height:16px;line-height:16px;color:#1f1f1f;letter-spacing:-0.12px">log?_dc=1729060443450&amp;id=786249615806</div>
<svg style="left:1053px;top:255.8px" width="14" height="10.4" viewBox="0 0 14 12" preserveAspectRatio="none"><path d="M3.6 0.8 Q2.2 0.8 2.2 2.2 V4.2 Q2.2 5.6 0.8 6 Q2.2 6.4 2.2 7.8 V9.8 Q2.2 11.2 3.6 11.2 M10.4 0.8 Q11.8 0.8 11.8 2.2 V4.2 Q11.8 5.6 13.2 6 Q11.8 6.4 11.8 7.8 V9.8 Q11.8 11.2 10.4 11.2" fill="none" stroke="#222" stroke-width="1.5"/><circle cx="7" cy="4" r="1.05" fill="#222"/><path d="M7.2 6.8 Q7.5 8.6 6.2 9.6" stroke="#222" stroke-width="1.4" fill="none"/></svg>
<div class="t" style="left:1071.3px;top:254.3px;height:16px;line-height:16px;color:#1f1f1f;letter-spacing:-0.12px">detail?_dc=1729060502605</div>
<div style="left:1048px;top:271px;width:335px;height:21px;background:#f5f7fd"></div>
<svg style="left:1053px;top:276.8px" width="14" height="10.4" viewBox="0 0 14 12" preserveAspectRatio="none"><path d="M3.6 0.8 Q2.2 0.8 2.2 2.2 V4.2 Q2.2 5.6 0.8 6 Q2.2 6.4 2.2 7.8 V9.8 Q2.2 11.2 3.6 11.2 M10.4 0.8 Q11.8 0.8 11.8 2.2 V4.2 Q11.8 5.6 13.2 6 Q11.8 6.4 11.8 7.8 V9.8 Q11.8 11.2 10.4 11.2" fill="none" stroke="#222" stroke-width="1.5"/><circle cx="7" cy="4" r="1.05" fill="#222"/><path d="M7.2 6.8 Q7.5 8.6 6.2 9.6" stroke="#222" stroke-width="1.4" fill="none"/></svg>
<div class="t" style="left:1071.3px;top:275.3px;height:16px;line-height:16px;color:#1f1f1f;letter-spacing:0.2px">getMinimumDetail</div>
<svg style="left:1053px;top:297.8px" width="14" height="10.4" viewBox="0 0 14 12" preserveAspectRatio="none"><path d="M3.6 0.8 Q2.2 0.8 2.2 2.2 V4.2 Q2.2 5.6 0.8 6 Q2.2 6.4 2.2 7.8 V9.8 Q2.2 11.2 3.6 11.2 M10.4 0.8 Q11.8 0.8 11.8 2.2 V4.2 Q11.8 5.6 13.2 6 Q11.8 6.4 11.8 7.8 V9.8 Q11.8 11.2 10.4 11.2" fill="none" stroke="#222" stroke-width="1.5"/><circle cx="7" cy="4" r="1.05" fill="#222"/><path d="M7.2 6.8 Q7.5 8.6 6.2 9.6" stroke="#222" stroke-width="1.4" fill="none"/></svg>
<div class="t" style="left:1071.3px;top:296.3px;height:16px;line-height:16px;color:#1f1f1f;letter-spacing:-0.12px">log?_dc=1729060502626&amp;id=786236161169</div>
<div style="left:1048px;top:313px;width:335px;height:21px;background:#f5f7fd"></div>
<svg style="left:1053px;top:318.8px" width="14" height="10.4" viewBox="0 0 14 12" preserveAspectRatio="none"><path d="M3.6 0.8 Q2.2 0.8 2.2 2.2 V4.2 Q2.2 5.6 0.8 6 Q2.2 6.4 2.2 7.8 V9.8 Q2.2 11.2 3.6 11.2 M10.4 0.8 Q11.8 0.8 11.8 2.2 V4.2 Q11.8 5.6 13.2 6 Q11.8 6.4 11.8 7.8 V9.8 Q11.8 11.2 10.4 11.2" fill="none" stroke="#222" stroke-width="1.5"/><circle cx="7" cy="4" r="1.05" fill="#222"/><path d="M7.2 6.8 Q7.5 8.6 6.2 9.6" stroke="#222" stroke-width="1.4" fill="none"/></svg>
<div class="t" style="left:1071.3px;top:317.3px;height:16px;line-height:16px;color:#1f1f1f;letter-spacing:-0.12px">detail?_dc=1729060503732</div>
<svg style="left:1053px;top:339.8px" width="14" height="10.4" viewBox="0 0 14 12" preserveAspectRatio="none"><path d="M3.6 0.8 Q2.2 0.8 2.2 2.2 V4.2 Q2.2 5.6 0.8 6 Q2.2 6.4 2.2 7.8 V9.8 Q2.2 11.2 3.6 11.2 M10.4 0.8 Q11.8 0.8 11.8 2.2 V4.2 Q11.8 5.6 13.2 6 Q11.8 6.4 11.8 7.8 V9.8 Q11.8 11.2 10.4 11.2" fill="none" stroke="#222" stroke-width="1.5"/><circle cx="7" cy="4" r="1.05" fill="#222"/><path d="M7.2 6.8 Q7.5 8.6 6.2 9.6" stroke="#222" stroke-width="1.4" fill="none"/></svg>
<div class="t" style="left:1071.3px;top:338.3px;height:16px;line-height:16px;color:#1f1f1f;letter-spacing:0.2px">getMinimumDetail</div>
<div style="left:1048px;top:355px;width:335px;height:21px;background:#f5f7fd"></div>
<svg style="left:1053px;top:360.8px" width="14" height="10.4" viewBox="0 0 14 12" preserveAspectRatio="none"><path d="M3.6 0.8 Q2.2 0.8 2.2 2.2 V4.2 Q2.2 5.6 0.8 6 Q2.2 6.4 2.2 7.8 V9.8 Q2.2 11.2 3.6 11.2 M10.4 0.8 Q11.8 0.8 11.8 2.2 V4.2 Q11.8 5.6 13.2 6 Q11.8 6.4 11.8 7.8 V9.8 Q11.8 11.2 10.4 11.2" fill="none" stroke="#222" stroke-width="1.5"/><circle cx="7" cy="4" r="1.05" fill="#222"/><path d="M7.2 6.8 Q7.5 8.6 6.2 9.6" stroke="#222" stroke-width="1.4" fill="none"/></svg>
<div class="t" style="left:1071.3px;top:359.3px;height:16px;line-height:16px;color:#1f1f1f;letter-spacing:-0.12px">log?_dc=1729060503742&amp;id=786236161169</div>
<div style="left:1048px;top:376px;width:335px;height:21px;background:#dcdcdc"></div>
<svg style="left:1053px;top:381.8px" width="14" height="10.4" viewBox="0 0 14 12" preserveAspectRatio="none"><path d="M3.6 0.8 Q2.2 0.8 2.2 2.2 V4.2 Q2.2 5.6 0.8 6 Q2.2 6.4 2.2 7.8 V9.8 Q2.2 11.2 3.6 11.2 M10.4 0.8 Q11.8 0.8 11.8 2.2 V4.2 Q11.8 5.6 13.2 6 Q11.8 6.4 11.8 7.8 V9.8 Q11.8 11.2 10.4 11.2" fill="none" stroke="#222" stroke-width="1.5"/><circle cx="7" cy="4" r="1.05" fill="#222"/><path d="M7.2 6.8 Q7.5 8.6 6.2 9.6" stroke="#222" stroke-width="1.4" fill="none"/></svg>
<div class="t" style="left:1071.3px;top:380.3px;height:16px;line-height:16px;color:#1f1f1f;letter-spacing:-0.12px">detail?_dc=1729060505937</div>
<div style="left:1048px;top:397px;width:335px;height:21px;background:#f5f7fd"></div>
<svg style="left:1053px;top:402.8px" width="14" height="10.4" viewBox="0 0 14 12" preserveAspectRatio="none"><path d="M3.6 0.8 Q2.2 0.8 2.2 2.2 V4.2 Q2.2 5.6 0.8 6 Q2.2 6.4 2.2 7.8 V9.8 Q2.2 11.2 3.6 11.2 M10.4 0.8 Q11.8 0.8 11.8 2.2 V4.2 Q11.8 5.6 13.2 6 Q11.8 6.4 11.8 7.8 V9.8 Q11.8 11.2 10.4 11.2" fill="none" stroke="#222" stroke-width="1.5"/><circle cx="7" cy="4" r="1.05" fill="#222"/><path d="M7.2 6.8 Q7.5 8.6 6.2 9.6" stroke="#222" stroke-width="1.4" fill="none"/></svg>
<div class="t" style="left:1071.3px;top:401.3px;height:16px;line-height:16px;color:#1f1f1f;letter-spacing:0.2px">getMinimumDetail</div>
<svg style="left:1053px;top:423.8px" width="14" height="10.4" viewBox="0 0 14 12" preserveAspectRatio="none"><path d="M3.6 0.8 Q2.2 0.8 2.2 2.2 V4.2 Q2.2 5.6 0.8 6 Q2.2 6.4 2.2 7.8 V9.8 Q2.2 11.2 3.6 11.2 M10.4 0.8 Q11.8 0.8 11.8 2.2 V4.2 Q11.8 5.6 13.2 6 Q11.8 6.4 11.8 7.8 V9.8 Q11.8 11.2 10.4 11.2" fill="none" stroke="#222" stroke-width="1.5"/><circle cx="7" cy="4" r="1.05" fill="#222"/><path d="M7.2 6.8 Q7.5 8.6 6.2 9.6" stroke="#222" stroke-width="1.4" fill="none"/></svg>
<div class="t" style="left:1071.3px;top:422.3px;height:16px;line-height:16px;color:#1f1f1f;letter-spacing:-0.12px">log?_dc=1729060505948&amp;id=786236161169</div>
<div style="left:1048px;top:648px;width:335px;height:1px;background:#cdd8f6"></div>
<div style="left:1048px;top:649px;width:335px;height:31px;background:#f6f6f6"></div>
<div class="t" style="left:1058.6px;top:657.0px;height:16px;line-height:16px;color:#222">12 次请求</div>
<div class="t" style="left:1118px;top:657.0px;height:16px;line-height:16px;color:#222;letter-spacing:-0.25px">已传输8.4 kB</div>
<div class="t" style="left:1192.7px;top:657.0px;height:16px;line-height:16px;color:#222;letter-spacing:-0.25px">5.7 kB 条资源</div>
<div style="left:1384px;top:160px;width:319px;height:30px;background:#f6f6f6"></div>
<div style="left:1384px;top:160px;width:319px;height:31px;background:#f6f6f6"></div>
<svg style="left:1397px;top:170px" width="14" height="14" viewBox="0 0 14 14"><path d="M1 1 L13 13 M13 1 L1 13" stroke="#444" stroke-width="1.1"/></svg>
<div style="left:1512px;top:162px;width:44px;height:29px;background:#fff;border-radius:3px 3px 0 0"></div>
<div style="left:1512px;top:189px;width:44px;height:2px;background:#2f5bd0"></div>
<div class="t" style="left:1433.4px;top:168.5px;height:16px;line-height:16px;color:#666">标头</div>
<div class="t" style="left:1477.5px;top:168.5px;height:16px;line-height:16px;color:#666">负载</div>
<div class="t" style="left:1521.4px;top:168.5px;height:16px;line-height:16px;color:#2f5bd0">预览</div>
<div class="t" style="left:1565.5px;top:168.5px;height:16px;line-height:16px;color:#666">响应</div>
<div class="t" style="left:1609.3px;top:168.5px;height:16px;line-height:16px;color:#666">发起程序</div>
<div class="t" style="left:1677.8px;top:168.5px;height:16px;line-height:16px;color:#666">计时</div>
<div style="left:1384px;top:191px;width:319px;height:472px;background:#fff"></div>
<div style="left:1384px;top:191px;width:319px;height:4px;background:linear-gradient(#ececec,#fff)"></div>
<div style="left:1384px;top:160px;width:319px;height:503px;overflow:hidden"><svg style="left:10px;top:44.30000000000001px" width="8.4" height="6" viewBox="0 0 8.4 6"><path d="M0.2 0.2 H8.2 L4.2 5.8 Z" fill="#444"/></svg><div class="m" style="left:24.700000000000045px;top:39px;height:16px;line-height:16px"><span style="color:#5a5a5a">{total: 1,…}</span></div><svg style="left:22px;top:60.30000000000001px" width="8.4" height="6" viewBox="0 0 8.4 6"><path d="M0.2 0.2 H8.2 L4.2 5.8 Z" fill="#444"/></svg><div class="m" style="left:36.549999999999955px;top:55px;height:16px;line-height:16px"><span class="k">rows</span><span class="d">: [{id: 786236172863, createDate: 1729057596000, del: false,</span></div><svg style="left:34px;top:76.30000000000001px" width="8.4" height="6" viewBox="0 0 8.4 6"><path d="M0.2 0.2 H8.2 L4.2 5.8 Z" fill="#444"/></svg><div class="m" style="left:48.40000000000009px;top:71px;height:16px;line-height:16px"><span class="k">0</span><span class="d">: {id: 786236172863, createDate: 1729057596000, del: false,</span></div><div class="m" style="left:60.25px;top:87px;height:16px;line-height:16px"><span class="k">createDate</span><span class="d">: </span><span class="n">1729057596000</span></div><div class="m" style="left:60.25px;top:103px;height:16px;line-height:16px"><span class="k">del</span><span class="d">: </span><span class="n">false</span></div><div class="m" style="left:60.25px;top:119px;height:16px;line-height:16px"><span class="k">downShelfQty</span><span class="d">: </span><span class="n">0</span></div><div class="m" style="left:60.25px;top:135px;height:16px;line-height:16px"><span class="k">id</span><span class="d">: </span><span class="n">786236172863</span></div><div class="m" style="left:60.25px;top:151px;height:16px;line-height:16px"><span class="k">itemCode</span><span class="d">: </span><span class="s">"22010543"</span></div><div class="m" style="left:60.25px;top:167px;height:16px;line-height:16px"><span class="k">itemName</span><span class="d">: </span><span class="s">"304<span style="font-size:12px;position:relative;top:1px">不锈钢压簧</span>1*15*40"</span></div><div class="m" style="left:60.25px;top:183px;height:16px;line-height:16px"><span class="k">itemQty</span><span class="d">: </span><span class="n">2</span></div><div class="m" style="left:60.25px;top:199px;height:16px;line-height:16px"><span class="k">itemSkuCode</span><span class="d">: </span><span class="g">null</span></div><div class="m" style="left:60.25px;top:215px;height:16px;line-height:16px"><span class="k">itemSkuName</span><span class="d">: </span><span class="g">null</span></div><div class="m" style="left:60.25px;top:231px;height:16px;line-height:16px"><span class="k">locationCode</span><span class="d">: </span><span class="g">null</span></div><div class="m" style="left:60.25px;top:247px;height:16px;line-height:16px"><span class="k">locationId</span><span class="d">: </span><span class="n">1</span></div><div class="m" style="left:60.25px;top:263px;height:16px;line-height:16px"><span class="k">locationQtyInfoList</span><span class="d">: </span><span class="g">null</span></div><div class="m" style="left:60.25px;top:279px;height:16px;line-height:16px"><span class="k">modifyDate</span><span class="d">: </span><span class="n">1729057596000</span></div><div class="m" style="left:60.25px;top:295px;height:16px;line-height:16px"><span class="k">pid</span><span class="d">: </span><span class="n">786236161169</span></div><div class="m" style="left:60.25px;top:311px;height:16px;line-height:16px"><span class="k">restockQty</span><span class="d">: </span><span class="n">0</span></div><div class="m" style="left:60.25px;top:327px;height:16px;line-height:16px"><span class="k">skuId</span><span class="d">: </span><span class="n">308494726874</span></div><div class="m" style="left:60.25px;top:343px;height:16px;line-height:16px"><span class="k">tenantId</span><span class="d">: </span><span class="n">307770397208</span></div><div class="m" style="left:60.25px;top:359px;height:16px;line-height:16px"><span class="k">unRestockQty</span><span class="d">: </span><span class="n">2</span></div><div class="m" style="left:60.25px;top:375px;height:16px;line-height:16px"><span class="k">version</span><span class="d">: </span><span class="n">0</span></div><div class="m" style="left:60.25px;top:391px;height:16px;line-height:16px"><span class="k">warehouseId</span><span class="d">: </span><span class="n">308152919942</span></div><div class="m" style="left:36px;top:407px;height:16px;line-height:16px"><span class="k">total</span><span class="d">: </span><span class="n">1</span></div></div>
<div style="left:1388px;top:323px;width:298px;height:26px;border:4px solid #f6495f;border-radius:4px;background:#fff"></div>
<div class="m" style="left:1444.25px;top:327px;height:16px;line-height:16px"><span class="k">itemName</span><span class="d">: </span><span class="s">"304<span style="font-size:12px;position:relative;top:1px">不锈钢压簧</span>1*15*40"</span></div>
<div style="left:1384px;top:663px;width:319px;height:17px;background:#fff"></div>
<div style="left:1384px;top:664.5px;width:319px;height:15.5px;background:#fbfbfb"></div>
<svg style="left:1391.5px;top:668px" width="8" height="9" viewBox="0 0 8 9"><path d="M7.6 0.4 V8.6 L0.6 4.5 Z" fill="#8a8a8a"/></svg>
<div style="left:1407px;top:668px;width:310px;height:9px;background:#8a8a8a;border-radius:4.5px"></div>
<div style="left:1383px;top:160px;width:1px;height:521px;background:#cdd8f6"></div>
<div style="left:1048px;top:680px;width:655px;height:1px;background:#cdd8f6"></div>
<div style="left:1048px;top:681px;width:655px;height:32px;background:#f6f6f6"></div>
<div style="left:1055px;top:683.5px;width:56px;height:27.5px;background:#fff;border-radius:4px"></div>
<div class="t" style="left:1064.8px;top:689.8px;height:16px;line-height:16px;color:#2f5bd0">控制台</div>
<div class="t" style="left:1120.6px;top:689.8px;height:16px;line-height:16px;color:#666">问题</div>
<svg style="left:1164px;top:690.5px" width="14" height="14" viewBox="0 0 14 14"><path d="M7 0.3 V13.7 M0.3 7 H13.7" stroke="#444" stroke-width="1.1"/></svg>
<div style="left:1048px;top:712.5px;width:655px;height:3.5px;background:linear-gradient(#e4e4e4,#f8f8f8)"></div>
<div style="left:1048px;top:716px;width:655px;height:26px;background:#f8f8f8"></div>
<svg style="left:1058px;top:722.5px" width="17" height="13" viewBox="0 0 17 13"><rect x="0.6" y="0.6" width="15.4" height="11.8" rx="1.8" fill="none" stroke="#333" stroke-width="1.2"/><path d="M0.6 2.4 Q0.6 0.6 2.4 0.6 H6.4 V12.4 H2.4 Q0.6 12.4 0.6 10.6 Z" fill="#333"/><path d="M8.6 6.5 H13 M11.2 4.6 L13.2 6.5 L11.2 8.4" stroke="#333" stroke-width="1" fill="none"/></svg>
<svg style="left:1089px;top:720px" width="18" height="18" viewBox="0 0 18 18"><circle cx="9" cy="9" r="7.6" fill="none" stroke="#444" stroke-width="1.1"/><path d="M3.8 14.4 L14.2 3.6" stroke="#444" stroke-width="1.1"/></svg>
<div style="left:1114px;top:717px;width:52px;height:25px;background:#e5e5e5;border-radius:3px 3px 0 0"></div>
<div class="t" style="left:1122.5px;top:721.5px;height:16px;line-height:16px;color:#222;font-size:12.5px">top</div>
<svg style="left:1146.5px;top:726px" width="11" height="7.5" viewBox="0 0 11 7.5"><path d="M0.3 0.3 H10.7 L5.5 7.2 Z" fill="#222"/></svg>
<svg style="left:1176px;top:722.5px" width="17" height="13" viewBox="0 0 17 13"><path d="M0.8 8.6 Q3 1.6 8.5 1.6 Q14 1.6 16.2 8.6" fill="none" stroke="#444" stroke-width="1.2"/><circle cx="8.5" cy="8" r="3.2" fill="none" stroke="#444" stroke-width="1.2"/></svg>
<div style="left:1203px;top:717px;width:120px;height:30px;background:#e9edf9;border-radius:13px"></div>
<svg style="left:1213px;top:724.5px" width="12" height="10" viewBox="0 0 12 10"><path d="M0.4 1.2 H11.6 M2.4 5 H9.6 M4.4 8.6 H7.6" stroke="#555" stroke-width="1.1"/></svg>
<div class="t" style="left:1231.4px;top:721.5px;height:16px;line-height:16px;color:#777">筛选器</div>
<div class="t" style="left:1335.3px;top:721.5px;height:16px;line-height:16px;color:#222">默认级别</div>
<svg style="left:1389px;top:725.5px" width="11" height="8" viewBox="0 0 11 8"><path d="M0.3 0.3 H10.7 L5.5 7.6 Z" fill="#222"/></svg>
<svg style="left:1418.5px;top:723.5px" width="11" height="11" viewBox="0 0 11 11"><path d="M5.5 0.4 A5 5 0 1 1 2 9 L0.5 10.6 L0.9 7.6 A5 5 0 0 1 5.5 0.4 Z" fill="#3c63e0"/><circle cx="5.6" cy="5.4" r="1.6" fill="none" stroke="#fff" stroke-width="0.8"/></svg>
<div class="t" style="left:1433.8px;top:721.5px;height:16px;line-height:16px;color:#222">41</div>
<svg style="left:1461px;top:720px" width="18" height="18" viewBox="0 0 18 18"><path d="M7.6 1 H10.4 L10.9 3.3 L12.6 4.2 L14.8 3.4 L16.3 5.8 L14.6 7.4 V9.4 L16.3 11.2 L14.8 13.6 L12.6 12.8 L10.9 13.8 L10.4 16 H7.6 L7.1 13.8 L5.4 12.8 L3.2 13.6 L1.7 11.2 L3.4 9.4 V7.4 L1.7 5.8 L3.2 3.4 L5.4 4.2 L7.1 3.3 Z" fill="none" stroke="#444" stroke-width="1.1" stroke-linejoin="round"/><circle cx="9" cy="8.5" r="2.4" fill="none" stroke="#444" stroke-width="1.1"/></svg>
</div></body></html>
